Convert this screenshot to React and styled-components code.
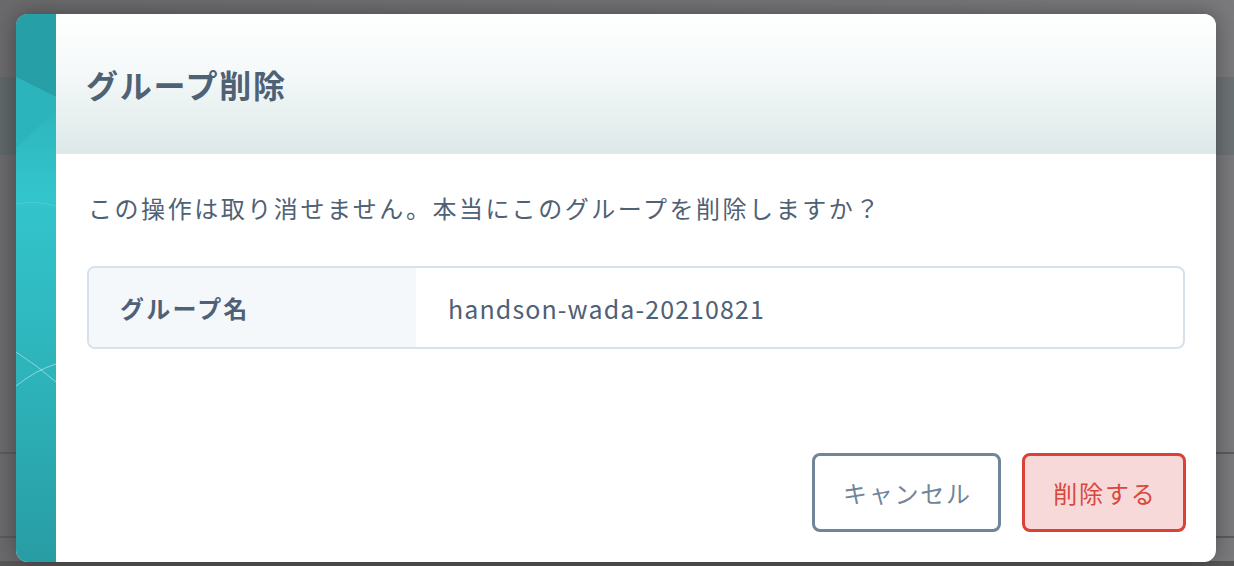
import React from "react";
import styled, { createGlobalStyle } from "styled-components";

const Global = createGlobalStyle`
  html, body { margin: 0; padding: 0; }
  body {
    font-family: "Noto Sans CJK JP", "Noto Sans", sans-serif;
    background: #6d6d6f;
  }
  * { box-sizing: border-box; }
`;

const Backdrop = styled.div`
  width: 1234px;
  height: 566px;
  overflow: hidden;
  padding: 14px 18px 0 16px;
  background:
    linear-gradient(to bottom,
      transparent 0, transparent 77px,
      rgba(70, 95, 95, 0.28) 77px, rgba(70, 95, 95, 0.28) 155px,
      transparent 155px, transparent 452px,
      #5b5b5d 452px, #5b5b5d 454px,
      transparent 454px, transparent 536px,
      #5b5b5d 536px, #5b5b5d 538px,
      transparent 538px, transparent 561px,
      #565656 561px),
    linear-gradient(to right, #6a6a6c 0, #727274 50%, #7a7a7c 100%);
`;

const Modal = styled.div`
  display: flex;
  width: 1200px;
  height: 548px;
  border-radius: 12px;
  overflow: hidden;
  background: #ffffff;
  box-shadow: 0 0 22px rgba(0, 0, 0, 0.35);
`;

const Strip = styled.div`
  flex: 0 0 40px;
  height: 100%;
  svg { display: block; width: 40px; height: 100%; }
`;

const Main = styled.div`
  flex: 1;
  display: flex;
  flex-direction: column;
`;

const Header = styled.div`
  height: 140px;
  display: flex;
  align-items: center;
  padding-left: 30px;
  background: linear-gradient(to bottom, #ffffff 0%, #f5f9f9 40%, #dde8e8 100%);
`;

const Title = styled.h1`
  margin: 0;
  font-size: 32px;
  font-weight: 700;
  letter-spacing: 1.8px;
  color: #4f6175;
`;

const Body = styled.div`
  flex: 1;
  display: flex;
  flex-direction: column;
  padding: 36px 31px 30px 31px;
`;

const Message = styled.p`
  margin: 0 0 0 1px;
  font-size: 24px;
  line-height: 36px;
  letter-spacing: 2.55px;
  color: #4f6175;
`;

const Table = styled.div`
  margin-top: 40px;
  display: flex;
  height: 83px;
  border: 2px solid #d6e1ec;
  border-radius: 8px;
  overflow: hidden;
`;

const LabelCell = styled.div`
  flex: 0 0 327px;
  display: flex;
  align-items: center;
  padding-left: 31px;
  background: #f5f8fb;
  font-size: 24px;
  font-weight: 700;
  letter-spacing: 2.2px;
  color: #4f6175;
`;

const ValueCell = styled.div`
  flex: 1;
  display: flex;
  align-items: center;
  padding-left: 32px;
  font-size: 25px;
  letter-spacing: 1.1px;
  color: #4f6175;
`;

const Footer = styled.div`
  margin-top: auto;
  margin-right: -1px;
  display: flex;
  justify-content: flex-end;
  gap: 21px;
`;

const Button = styled.button`
  width: ${(p) => p.$width}px;
  height: 79px;
  padding: 0;
  border-radius: 8px;
  border: 3px solid ${(p) => (p.$danger ? "#da4137" : "#718599")};
  background: ${(p) => (p.$danger ? "#f7d9d9" : "#ffffff")};
  color: ${(p) => (p.$danger ? "#d9473e" : "#718599")};
  font-family: "Noto Sans CJK JP", sans-serif;
  font-size: 24px;
  letter-spacing: 1.8px;
  text-indent: 1.8px;
  cursor: pointer;
`;

function StripArt() {
  return (
    <svg viewBox="0 0 40 548" preserveAspectRatio="none">
      <defs>
        <linearGradient id="tg" x1="0" y1="0" x2="0" y2="1">
          <stop offset="0" stopColor="#28a3aa" />
          <stop offset="0.33" stopColor="#33c5cc" />
          <stop offset="0.7" stopColor="#2db1b8" />
          <stop offset="1" stopColor="#289ca3" />
        </linearGradient>
      </defs>
      <rect x="0" y="0" width="40" height="548" fill="url(#tg)" />
      <polygon points="0,0 40,0 40,83 0,63" fill="#279fa6" />
      <polygon points="0,63 40,83 40,96 0,134" fill="#2cb4bc" />
      <path d="M0 190 Q20 186 40 192" stroke="#ffffff" strokeOpacity="0.12" fill="none" />
      <path d="M0 338 Q22 352 40 368" stroke="#ffffff" strokeOpacity="0.45" strokeWidth="1" fill="none" />
      <path d="M0 372 Q20 356 40 350" stroke="#ffffff" strokeOpacity="0.45" strokeWidth="1" fill="none" />
    </svg>
  );
}

export default function App() {
  return (
    <>
      <Global />
      <Backdrop>
        <Modal>
          <Strip>
            <StripArt />
          </Strip>
          <Main>
            <Header>
              <Title>グループ削除</Title>
            </Header>
            <Body>
              <Message>この操作は取り消せません。本当にこのグループを削除しますか？</Message>
              <Table>
                <LabelCell>グループ名</LabelCell>
                <ValueCell>handson-wada-20210821</ValueCell>
              </Table>
              <Footer>
                <Button $width={189}>キャンセル</Button>
                <Button $danger $width={164}>削除する</Button>
              </Footer>
            </Body>
          </Main>
        </Modal>
      </Backdrop>
    </>
  );
}
